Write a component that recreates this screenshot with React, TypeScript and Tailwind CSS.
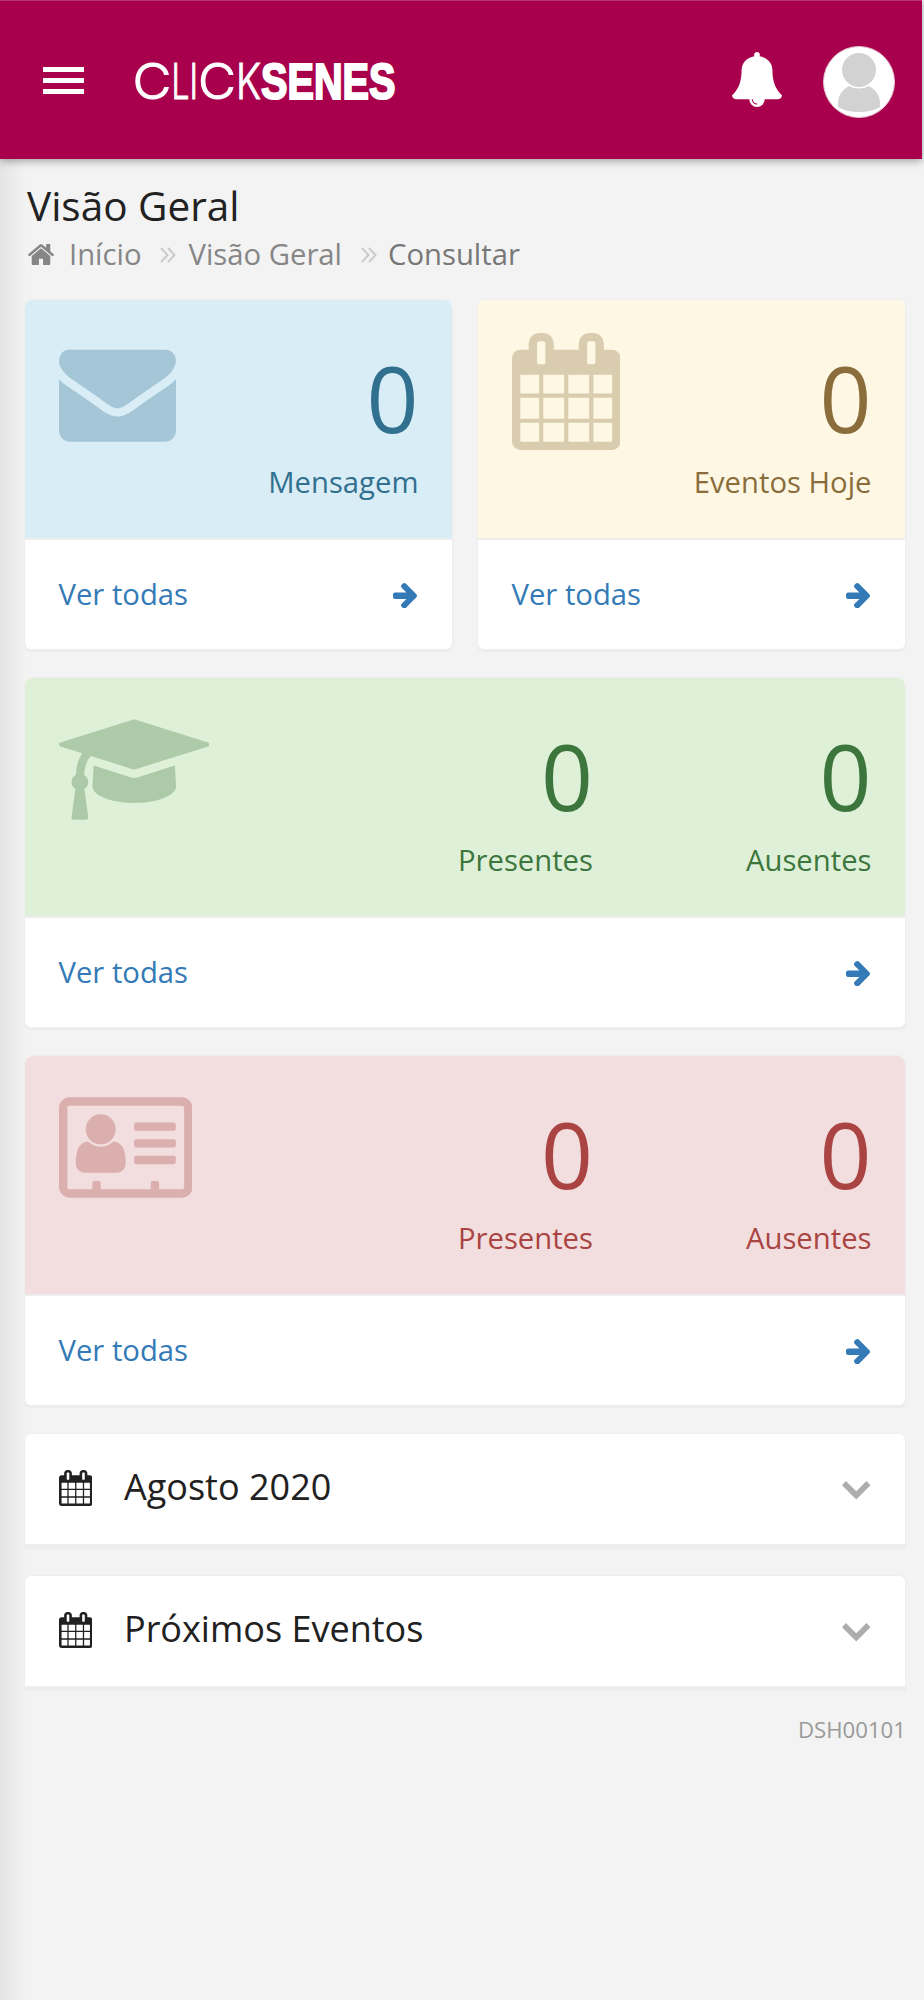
import type { ReactNode } from 'react'

const ICONS = {
  envelope: {
    viewBox: '0 0 1792 1792',
    d: 'M1792 710v794q0 66-47 113t-113 47h-1472q-66 0-113-47t-47-113v-794q44 49 101 87 362 246 497 345 57 42 92.5 65.5t94.5 48 110 24.5h2q51 0 110-24.5t94.5-48 92.5-65.5q170-123 498-345 57-39 100-87zm0-294q0 79-49 151t-122 123q-376 261-468 325-10 7-42.5 31t-54 38.5-52 32.5-57.5 27-50 9h-2q-23 0-50-9t-57.5-27-52-32.5-54-38.5-42.5-31q-91-64-262-182.5t-205-142.5q-62-42-117-115.5t-55-136.5q0-78 41.5-130t118.5-52h1472q65 0 112.5 47t47.5 113z',
  },
  calendar: {
    viewBox: '64 0 1664 1792',
    d: 'M192 1664h288v-288h-288v288zm352 0h320v-288h-320v288zm-352-352h288v-320h-288v320zm352 0h320v-320h-320v320zm-352-384h288v-288h-288v288zm736 736h320v-288h-320v288zm-384-736h320v-288h-320v288zm768 736h288v-288h-288v288zm-384-352h320v-320h-320v320zm-352-864v-288q0-13-9.5-22.5t-22.5-9.5h-64q-13 0-22.5 9.5t-9.5 22.5v288q0 13 9.5 22.5t22.5 9.5h64q13 0 22.5-9.5t9.5-22.5zm736 864h288v-320h-288v320zm-384-384h320v-288h-320v288zm384 0h288v-288h-288v288zm32-480v-288q0-13-9.5-22.5t-22.5-9.5h-64q-13 0-22.5 9.5t-9.5 22.5v288q0 13 9.5 22.5t22.5 9.5h64q13 0 22.5-9.5t9.5-22.5zm384-64v1280q0 52-38 90t-90 38h-1408q-52 0-90-38t-38-90v-1280q0-52 38-90t90-38h128v-96q0-66 47-113t113-47h64q66 0 113 47t47 113v96h384v-96q0-66 47-113t113-47h64q66 0 113 47t47 113v96h128q52 0 90 38t38 90z',
  },
  graduation: {
    viewBox: '0 0 2304 1792',
    d: 'M1774 836l18 316q4 69-82 128t-235 93.5-323 34.5-323-34.5-235-93.5-82-128l18-316 574 181q22 7 48 7t48-7zm530-324q0 23-22 31l-1120 352q-4 1-10 1t-10-1l-652-206q-43 34-71 111.5t-34 178.5q63 36 63 109 0 69-58 107l58 433q2 14-8 25-9 11-24 11h-192q-15 0-24-11-10-11-8-25l58-433q-58-38-58-107 0-73 65-111 11-207 98-330l-333-104q-22-8-22-31t22-31l1120-352q4-1 10-1t10 1l1120 352q22 8 22 31z',
  },
  card: {
    viewBox: '0 -128 2048 1792',
    d: 'M1024 1003q0 64-37 107t-91 43h-512q-54 0-91-43t-37-107q0-61 9-118t30-104 61-75.5 88-28.5q94 80 196 80t196-80q50 0 88 28.5t61 75.5 30 104 9 118zM870 490a230 230 0 1 1-460 0a230 230 0 1 1 460 0zM1792 928v64q0 32-32 32h-576q-32 0-32-32v-64q0-32 32-32h576q32 0 32 32zm0-256v64q0 32-32 32h-576q-32 0-32-32v-64q0-32 32-32h576q32 0 32 32zm0-256v64q0 32-32 32h-576q-32 0-32-32v-64q0-32 32-32h576q32 0 32 32zm128 960v-1216q0-32-32-32h-1728q-32 0-32 32v1216q0 32 32 32h352v-96q0-32 32-32h64q32 0 32 32v96h768v-96q0-32 32-32h64q32 0 32 32v96h352q32 0 32-32zm128-1216v1216q0 66-47 113t-113 47h-1728q-66 0-113-47t-47-113v-1216q0-66 47-113t113-47h1728q66 0 113 47t47 113z',
  },
  home: {
    viewBox: '89 253 1614 1283',
    d: 'M1472 992v480q0 26-19 45t-45 19h-384v-384h-256v384h-384q-26 0-45-19t-19-45v-480q0-1 .5-3t.5-3l575-474 575 474q1 2 1 6zm223-69l-62 74q-8 9-21 11h-3q-13 0-21-7l-692-577-692 577q-12 8-24 7-13-2-21-11l-62-74q-8-10-7-23.5t11-21.5l719-599q32-26 76-26t76 26l244 204v-195q0-14 9-23t23-9h192q14 0 23 9t9 23v408l219 182q10 8 11 21.5t-7 23.5z',
  },
  bell: {
    viewBox: '64 0 1664 1792',
    d: 'M912 1696q0-16-16-16-59 0-101.5-42.5t-42.5-101.5q0-16-16-16t-16 16q0 73 51.5 124.5t124.5 51.5q16 0 16-16zm816-288q0 52-38 90t-90 38h-448q0 106-75 181t-181 75-181-75-75-181h-448q-52 0-90-38t-38-90q50-42 91-88t85-119.5 74.5-158.5 50-206 19.5-260q0-152 117-282.5t307-158.5q-8-19-8-39 0-40 28-68t68-28 68 28 28 68q0 20-8 39 190 28 307 158.5t117 282.5q0 139 19.5 260t50 206 74.5 158.5 85 119.5 91 88z',
  },
  arrow: {
    viewBox: '192 181 1472 1558',
    d: 'M1664 960q0 54-37 91l-651 651q-39 37-91 37-51 0-90-37l-75-75q-38-38-38-91t38-91l293-293h-704q-52 0-84.5-37.5t-32.5-90.5v-128q0-53 32.5-90.5t84.5-37.5h704l-293-294q-38-36-38-90t38-90l75-75q38-38 90-38 53 0 91 38l651 651q37 35 37 90z',
  },
  chevron: {
    viewBox: '0 0 86 56',
    d: 'M12 0L43 31L74 0L86 13L43 56L0 13Z',
  },
}

type IconName = keyof typeof ICONS

interface IconProps {
  name: IconName
  className: string
}

function Icon({ name, className }: IconProps) {
  const { viewBox, d } = ICONS[name]
  return (
    <svg viewBox={viewBox} className={className} fill="currentColor" preserveAspectRatio="none">
      <path fillRule="evenodd" d={d} />
    </svg>
  )
}

function Separator() {
  return (
    <svg viewBox="0 0 16 16" className="mt-[2px] size-4 shrink-0 text-[#cbcbcb]" fill="none" stroke="currentColor" strokeWidth="2">
      <path d="M1 1L7.5 8L1 15M8 1L14.5 8L8 15" />
    </svg>
  )
}

function Logo() {
  return (
    <svg viewBox="0 0 320 70" className="mt-[45px] ml-[46px] h-[70px] w-[320px]" fill="#fff" stroke="#fff">
      <g fontFamily="Inter" fontWeight="300" fontSize="49" strokeWidth="1">
        <text x="2.5" y="53" textLength="39" lengthAdjust="spacingAndGlyphs">C</text>
        <text x="41.5" y="53" textLength="18" lengthAdjust="spacingAndGlyphs">L</text>
        <text x="59.5" y="53" textLength="8.5" lengthAdjust="spacingAndGlyphs">I</text>
        <text x="68" y="53" textLength="38" lengthAdjust="spacingAndGlyphs">C</text>
        <text x="106" y="53" textLength="25" lengthAdjust="spacingAndGlyphs">K</text>
      </g>
      <text
        x="131"
        y="53"
        fontFamily="Liberation Sans"
        fontWeight="700"
        fontSize="50.5"
        strokeWidth="2.2"
        textLength="134.5"
        lengthAdjust="spacingAndGlyphs"
      >
        SENES
      </text>
    </svg>
  )
}

function Header() {
  return (
    <header className="mr-[2px] flex h-[159px] items-start border-t border-[#b8336f] bg-[#a8004c] shadow-[0_2px_8px_rgba(0,0,0,0.35)]">
      <button className="mt-[66px] ml-[43px] flex w-[41px] flex-col gap-[6px]">
        <span className="h-[5px] w-full bg-white" />
        <span className="h-[5px] w-full bg-white" />
        <span className="h-[5px] w-full bg-white" />
      </button>
      <Logo />
      <Icon name="bell" className="mt-[51px] ml-auto h-[55px] w-[50px] text-white" />
      <svg viewBox="0 0 72 72" className="mt-[45px] mr-[27px] ml-[41px] size-[72px]">
        <circle cx="36" cy="36" r="35.5" fill="#fff" stroke="#e5c3d1" />
        <circle cx="36" cy="24" r="17" fill="#d2d2d2" />
        <path d="M26 40Q36 45 46 40Q57 46 57 57V61Q49 66 36 66T15 61V57Q15 46 26 40Z" fill="#d2d2d2" />
      </svg>
    </header>
  )
}

interface StatCardProps {
  icon: ReactNode
  tone: string
  stats: string[]
  className?: string
}

function StatCard({ icon, tone, stats, className = '' }: StatCardProps) {
  return (
    <div className={`h-[349px] overflow-hidden rounded-[6px] bg-white shadow-[0_0_0_1px_#eeeeee,0_2px_1px_1px_#ececec] ${className}`}>
      <div className={`flex h-[237.5px] justify-between rounded-t-[7px] px-[33.5px] pt-[33px] ${tone}`}>
        <div className="shrink-0 opacity-30">{icon}</div>
        <div className="flex">
          {stats.map((label) => (
            <div key={label} className={stats.length > 1 ? 'w-[278.5px] text-right' : 'text-right'}>
              <div className="pt-px text-[91px] leading-[128px]">0</div>
              <div className="-mt-px text-[29.25px] leading-[42px] whitespace-nowrap">{label}</div>
            </div>
          ))}
        </div>
      </div>
      <div className="flex h-[111.5px] items-center justify-between border-t-2 border-[#eeeeee] pr-[35px] pl-[33.5px] text-[#337ab7]">
        <a className="pb-px text-[29.25px] leading-[42px]">Ver todas</a>
        <Icon name="arrow" className="mt-[2px] h-[25.5px] w-6" />
      </div>
    </div>
  )
}

function Panel({ title }: { title: string }) {
  return (
    <div className="flex h-[110px] items-center rounded-t-[6px] bg-white pr-[35px] pl-[33.5px] shadow-[0_0_0_1px_#eeeeee,0_4px_1px_1px_#ededed]">
      <Icon name="calendar" className="mb-[2px] h-9 w-[33.5px]" />
      <h2 className="ml-[32px] pb-[4px] text-[36px] leading-[50px]">{title}</h2>
      <Icon name="chevron" className="mt-[3px] ml-auto h-[18.5px] w-[28.5px] text-[#adadad]" />
    </div>
  )
}

export default function App() {
  return (
    <div className="flex h-[2000px] w-[924px] flex-col bg-[#f3f3f3] bg-linear-to-r from-[#e4e4e4] to-[#f3f3f3] to-[26px] font-['Open_Sans',sans-serif] text-[#212121]">
      <Header />
      <main className="flex flex-col pr-[19px] pl-[25px]">
        <h1 className="mt-[17px] ml-[2px] text-[40.5px] leading-[60px]">Visão Geral</h1>
        <nav className="ml-[3px] flex h-[36px] items-center text-[29.25px] leading-[36px] text-[#868686]">
          <Icon name="home" className="h-[21px] w-[26px]" />
          <span className="ml-[15px]">Início</span>
          <span className="ml-[19px]"><Separator /></span>
          <span className="ml-[12px]">Visão Geral</span>
          <span className="ml-[19px]"><Separator /></span>
          <span className="ml-[11px] text-[#777777]">Consultar</span>
        </nav>

        <div className="mt-[28px] grid grid-cols-2 gap-x-[26px] gap-y-[29px]">
          <StatCard
            icon={<Icon name="envelope" className="h-[117px] w-[117px]" />}
            tone="bg-[#d9edf7] text-[#31708f]"
            stats={['Mensagem']}
          />
          <StatCard
            icon={<Icon name="calendar" className="h-[117px] w-[108.5px]" />}
            tone="bg-[#fdf7e3] text-[#8a6d3b]"
            stats={['Eventos Hoje']}
          />
          <StatCard
            icon={<Icon name="graduation" className="h-[117px] w-[150.5px]" />}
            tone="bg-[#dff0d8] text-[#3c763d]"
            stats={['Presentes', 'Ausentes']}
            className="col-span-2"
          />
          <StatCard
            icon={<Icon name="card" className="h-[117px] w-[133.5px]" />}
            tone="bg-[#f2dede] text-[#a94442]"
            stats={['Presentes', 'Ausentes']}
            className="col-span-2"
          />
        </div>

        <div className="mt-[29px] flex flex-col gap-8">
          <Panel title="Agosto 2020" />
          <Panel title="Próximos Eventos" />
        </div>
        <p className="-mr-px mt-[28px] text-right text-[22.2px] leading-[32px] text-[#999999]">DSH00101</p>
      </main>
    </div>
  )
}
